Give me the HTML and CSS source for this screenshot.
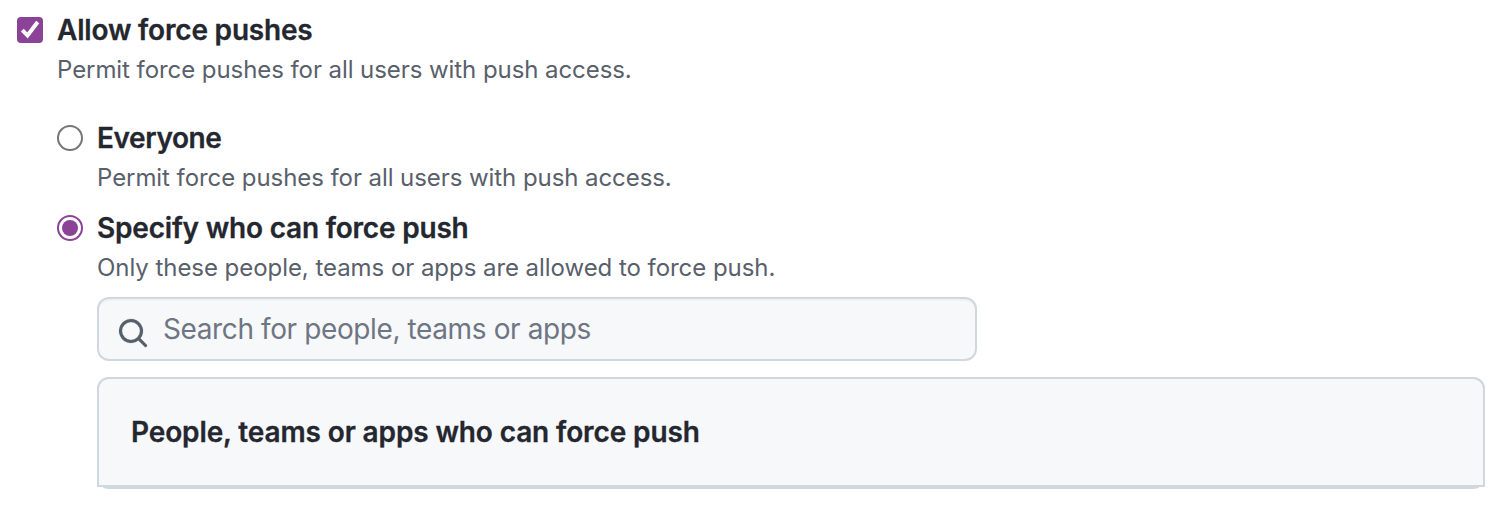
FILE: index.html
```html
<!DOCTYPE html>
<html lang="en">
<head>
<meta charset="utf-8">
<title>Branch protection</title>
<link rel="stylesheet" href="styles.css">
</head>
<body>
<main class="settings">
  <label class="option">
    <svg class="control" viewBox="0 0 26 26"><rect width="26" height="26" rx="4" fill="#8b4398"/><path d="M5.300 13.200l5.200 5.200L20.700 5" fill="none" stroke="#fff" stroke-width="4"/></svg>
    <span class="text"><strong class="title t1">Allow force pushes</strong><span class="note n1">Permit force pushes for all users with push access.</span></span>
  </label>
  <div class="choices">
    <label class="option everyone">
      <svg class="control" viewBox="0 0 26 26"><circle cx="13" cy="13" r="12" fill="#fff" stroke="#767676" stroke-width="2"/></svg>
      <span class="text"><strong class="title t2">Everyone</strong><span class="note n1">Permit force pushes for all users with push access.</span></span>
    </label>
    <label class="option">
      <svg class="control" viewBox="0 0 26 26"><circle cx="13" cy="13" r="12" fill="#fff" stroke="#8b4398" stroke-width="2"/><circle cx="13" cy="13" r="8" fill="#8b4398"/></svg>
      <span class="text"><strong class="title t3">Specify who can force push</strong><span class="note n3">Only these people, teams or apps are allowed to force push.</span></span>
    </label>
    <div class="details">
      <div class="search">
        <svg class="glass" viewBox="0 0 16 16"><path fill="#57606a" stroke="#57606a" stroke-width=".1" fill-rule="evenodd" d="M11.500 7a4.500 4.500 0 1 1-9 0 4.500 4.500 0 0 1 9 0zm-.82 4.740a6 6 0 1 1 1.060-1.060l3.040 3.040a.75.75 0 1 1-1.060 1.060l-3.040-3.040z"/></svg>
        <span class="placeholder">Search for people, teams or apps</span>
      </div>
      <div class="box"><div class="box-header"><strong class="title t4">People, teams or apps who can force push</strong></div></div>
    </div>
  </div>
</main>
</body>
</html>
```
FILE: styles.css
```css
* { box-sizing: border-box; }
body { margin: 0; background: #fff; color: #24272f; font-family: Inter, sans-serif; }
.settings { padding: 9px 19px 0 17px; }
.option { display: flex; gap: 14px; }
.control { width: 26px; height: 26px; margin-top: 8px; flex: none; }
.text { display: flex; flex-direction: column; align-items: flex-start; }
.title, .note, .placeholder { white-space: nowrap; }
.title { font-size: 28px; line-height: 42px; font-weight: 600; -webkit-text-stroke: .3px currentColor; }
.t1 { letter-spacing: -.19px; }
.t2 { letter-spacing: -.4px; }
.t3 { letter-spacing: -.2px; }
.t4 { letter-spacing: -.12px; }
.note { font-size: 24px; line-height: 38px; color: #59606b; }
.n1 { letter-spacing: -.07px; }
.n3 { letter-spacing: -.05px; }
.choices { padding: 28px 0 0 40px; }
.everyone { margin-bottom: 10px; }
.details { padding: 10px 0 0 40px; }
.search { display: flex; width: 880px; height: 64px; padding: 0 18px; border: 2px solid #d0d7de; border-radius: 12px; background: #f7f8fa; box-shadow: inset 0 2px 0 rgba(208, 215, 222, .2); }
.glass { width: 32px; height: 32px; margin-top: 18px; margin-right: 14px; flex: none; }
.placeholder { font-size: 28px; line-height: 60px; letter-spacing: -.39px; color: #6e7583; }
.box { margin-top: 16px; height: 112px; border: 2px solid #d0d7de; border-radius: 12px; }
.box-header { margin: -2px -2px 0; height: 110px; padding: 32px; border: 2px solid #d0d7de; border-radius: 12px 12px 0 0; background: #f7f8fa; }
```
